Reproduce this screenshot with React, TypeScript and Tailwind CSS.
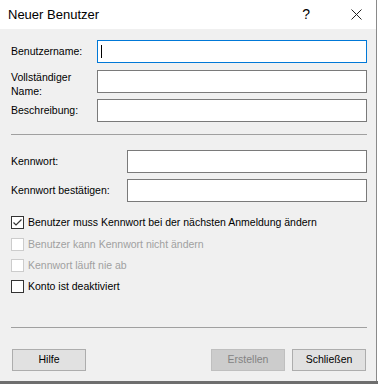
import React from "react";

const font = { fontFamily: '"Liberation Sans", Arial, sans-serif' };

function Input({ focused, w }: { focused?: boolean; w: string }) {
  return (
    <div
      className={`relative h-[23px] shrink-0 bg-white border ${focused ? "border-[#0078d7]" : "border-[#7a7a7a]"} ${w}`}
    >
      {focused && <div className="absolute left-[3px] top-[4px] w-px h-[13px] bg-black" />}
    </div>
  );
}

function Check({ checked, disabled, label }: { checked?: boolean; disabled?: boolean; label: string }) {
  return (
    <div className="flex items-center h-[13px]">
      <div
        className={`w-[13px] h-[13px] border bg-white flex items-center justify-center ${disabled ? "border-[#cccccc]" : "border-[#333333]"}`}
      >
        {checked && (
          <svg width="11" height="11" viewBox="0 0 11 11">
            <path d="M1.5 5.5 L4 8 L9.5 2.5" stroke="#333" strokeWidth="1.2" fill="none" />
          </svg>
        )}
      </div>
      <span className={`ml-[4px] text-[10.5px] leading-none ${disabled ? "text-[#a0a0a0]" : "text-black"}`}>{label}</span>
    </div>
  );
}

function Button({ label, disabled }: { label: string; disabled?: boolean }) {
  return (
    <div
      className={`w-[74px] h-[22px] border flex items-center justify-center text-[10.5px] ${
        disabled ? "bg-[#cccccc] border-[#bfbfbf] text-[#838383]" : "bg-[#e1e1e1] border-[#adadad] text-black"
      }`}
    >
      {label}
    </div>
  );
}

export default function App() {
  return (
    <div className="w-[379px] h-[384px] bg-white relative" style={font}>
      <div className="w-[377px] h-[381px] border-r border-[#8a8a8a] bg-[#f0f0f0] flex flex-col">
        <div className="h-[29px] bg-white flex items-center pl-[8px] text-[13px] text-black">
          <span>Neuer Benutzer</span>
          <span className="ml-auto mr-[8px] text-[14px]">?</span>
          <svg className="mr-[14px] ml-[33px]" width="11" height="11" viewBox="0 0 11 11">
            <path d="M0.5 0.5 L10.5 10.5 M10.5 0.5 L0.5 10.5" stroke="#222" strokeWidth="1" />
          </svg>
        </div>
        <div className="pl-[11px] pr-[9px] pt-[11px] text-[10.5px] text-black">
          <div className="flex items-center h-[23px]">
            <div className="w-[87px]">Benutzername:</div>
            <Input focused w="w-[270px]" />
          </div>
          <div className="flex items-start mt-[7px] h-[23px]">
            <div className="w-[87px] leading-[14px] pt-[0px]">
              Vollständiger
              <br />
              Name:
            </div>
            <Input w="w-[270px]" />
          </div>
          <div className="flex items-center mt-[6px] h-[23px]">
            <div className="w-[87px]">Beschreibung:</div>
            <Input w="w-[270px]" />
          </div>
          <div className="mt-[12px] h-px bg-[#a0a0a0] w-[356px]" />
          <div className="flex items-center mt-[15px] h-[23px]">
            <div className="w-[117px]">Kennwort:</div>
            <Input w="w-[240px]" />
          </div>
          <div className="flex items-center mt-[6px] h-[23px]">
            <div className="w-[117px]">Kennwort bestätigen:</div>
            <Input w="w-[240px]" />
          </div>
          <div className="mt-[14px] flex flex-col gap-[8px]">
            <Check checked label="Benutzer muss Kennwort bei der nächsten Anmeldung ändern" />
            <div className="mt-px">
              <Check disabled label="Benutzer kann Kennwort nicht ändern" />
            </div>
            <Check disabled label="Kennwort läuft nie ab" />
            <Check label="Konto ist deaktiviert" />
          </div>
          <div className="mt-[34px] h-px bg-[#a0a0a0] w-[356px]" />
          <div className="flex mt-[21px] pl-px">
            <Button label="Hilfe" />
            <div className="ml-auto mr-[1px] flex gap-[7px]">
              <Button label="Erstellen" disabled />
              <Button label="Schließen" />
            </div>
          </div>
        </div>
      </div>
      <div className="h-[3px] w-[378px] bg-[#6e6e6e]" />
    </div>
  );
}
